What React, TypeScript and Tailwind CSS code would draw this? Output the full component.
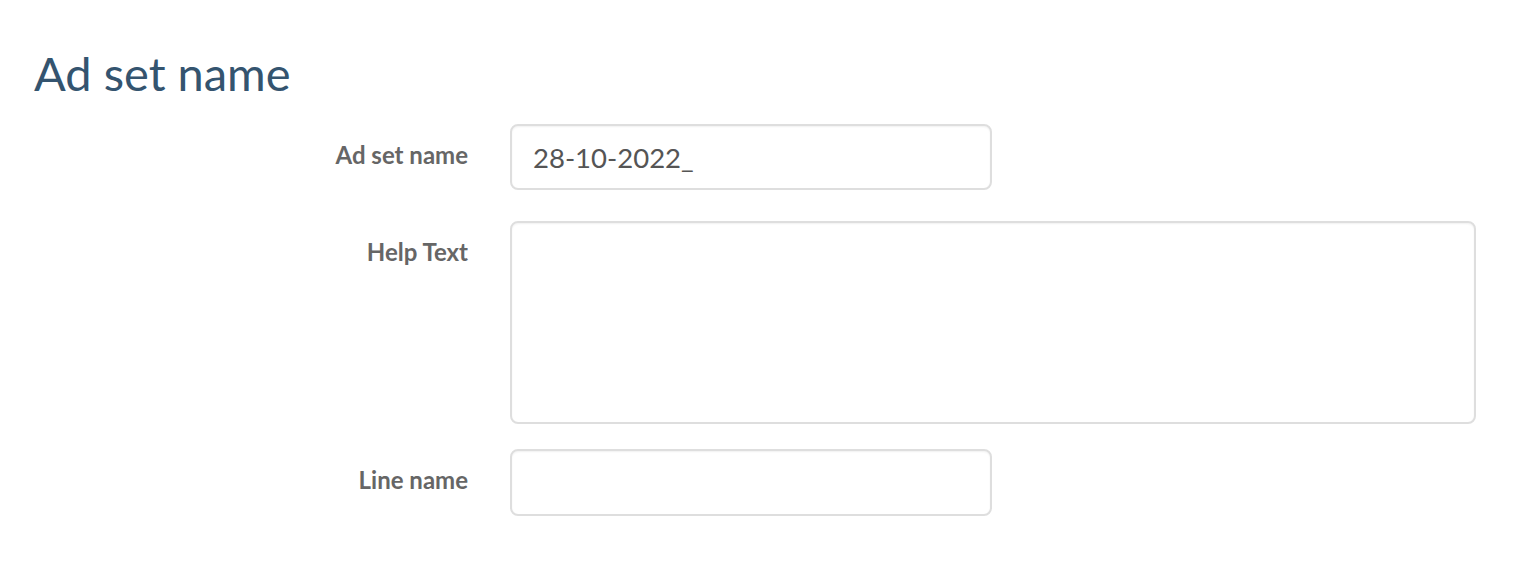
import React from 'react';

const fieldBase =
  'block w-full rounded-lg border-2 border-[#dedede] bg-white px-[21px] text-[27.5px] text-[#555] shadow-[inset_0_1px_2px_rgba(0,0,0,0.06)] outline-none';

function Row({ label, children, className = '' }: { label: string; children: React.ReactNode; className?: string }) {
  return (
    <div className={`flex items-start ${className}`}>
      <label className="w-[468px] shrink-0 pt-[15px] text-right text-[24px] font-bold leading-[32px] text-[#666]">
        {label}
      </label>
      <div className="ml-[42px] flex-1">{children}</div>
    </div>
  );
}

export default function App() {
  return (
    <div className="h-[564px] w-[1534px] bg-white font-['Lato',sans-serif]">
      <h1 className="pl-[34px] pt-[45px] text-[47px] font-normal leading-[56px] text-[#34546f]">Ad set name</h1>
      <form className="mt-[23px] pr-[58px]">
        <Row label="Ad set name">
          <input
            type="text"
            defaultValue="28-10-2022_"
            className={`${fieldBase} h-[66px] max-w-[482px]`}
          />
        </Row>
        <Row label="Help Text" className="mt-[31px]">
          <textarea className={`${fieldBase} h-[203px] resize-none py-3`} />
        </Row>
        <Row label="Line name" className="mt-[25px]">
          <input type="text" className={`${fieldBase} h-[67px] max-w-[482px]`} />
        </Row>
      </form>
    </div>
  );
}
